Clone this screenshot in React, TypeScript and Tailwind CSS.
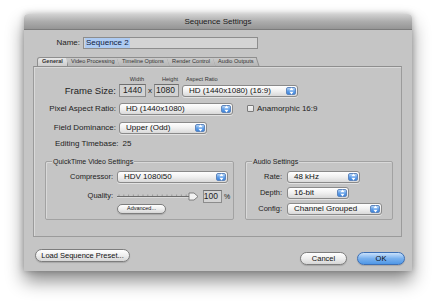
import type { ReactNode } from 'react';

function Arrows() {
  return (
    <svg width="5" height="8" viewBox="0 0 5 8">
      <path d="M2.5 0.5 L4.6 3.2 L0.4 3.2 Z" fill="#fff" />
      <path d="M2.5 7.5 L4.6 4.8 L0.4 4.8 Z" fill="#fff" />
    </svg>
  );
}

function Popup({ label, className }: { label: string; className: string }) {
  return (
    <div className={`flex h-[12px] items-stretch rounded-[3px] border border-[#8a8a8a] bg-linear-to-b from-[#ffffff] via-[#f0f0f0] to-[#d9d9d9] shadow-[0_1px_0_rgba(255,255,255,0.5)] ${className}`}>
      <div className="flex flex-1 items-center overflow-hidden whitespace-nowrap pl-[6px] text-[8px] leading-none text-[#111]">{label}</div>
      <div className="my-[1px] mr-[1px] flex w-[10px] items-center justify-center rounded-[2px] border border-[#5f86bd] bg-linear-to-b from-[#b9d8f8] via-[#5f9ee8] to-[#3f86dc]">
        <Arrows />
      </div>
    </div>
  );
}

function Field({ value, className }: { value: string; className: string }) {
  return (
    <div className={`flex h-[13px] items-center justify-end border border-[#8c8c8c] border-t-[#6e6e6e] bg-[#d3d3d3] pr-[3px] text-[8.5px] leading-none text-[#222] ${className}`}>
      {value}
    </div>
  );
}

function Pill({ children, className, blue }: { children: ReactNode; className: string; blue?: boolean }) {
  return (
    <div
      className={`flex items-center justify-center rounded-full border leading-none ${
        blue
          ? 'border-[#3d6fb4] bg-linear-to-b from-[#c9e1fb] via-[#79b1ee] to-[#4f97e6] text-[#0a0a0a]'
          : 'border-[#7d7d7d] bg-linear-to-b from-[#ffffff] via-[#eeeeee] to-[#d6d6d6] text-[#111]'
      } shadow-[0_1px_1px_rgba(0,0,0,0.15)] ${className}`}
    >
      {children}
    </div>
  );
}

function Group({ title, className, children }: { title: string; className: string; children: ReactNode }) {
  return (
    <div className={`relative h-[59px] rounded-[2px] border border-[#a2a2a2] shadow-[inset_1px_1px_0_rgba(255,255,255,0.35)] ${className}`}>
      <div className="absolute left-[6px] top-[-5px] bg-[#c5c5c5] px-[1px] text-[7px] leading-[9px] text-[#222]">{title}</div>
      {children}
    </div>
  );
}

function Slider() {
  const ticks = Array.from({ length: 16 }, (_, i) => 3 + i * 4.8);
  return (
    <svg width="84" height="9" viewBox="0 0 84 9">
      <line x1="1" y1="4.5" x2="76" y2="4.5" stroke="#6c6c6c" strokeWidth="1" />
      <line x1="1" y1="5.5" x2="76" y2="5.5" stroke="#e6e6e6" strokeWidth="0.6" />
      {ticks.map((x) => (
        <line key={x} x1={x} y1="2.5" x2={x} y2="4" stroke="#7a7a7a" strokeWidth="0.6" />
      ))}
      <path d="M73 1 L78 1 L82 4.5 L78 8 L73 8 Z" fill="#f2f2f2" stroke="#6a6a6a" strokeWidth="0.8" />
    </svg>
  );
}

const tabs = ['General', 'Video Processing', 'Timeline Options', 'Render Control', 'Audio Outputs'];

export default function App() {
  return (
    <div className="h-[304px] w-[435px] overflow-hidden bg-white pt-[14px] pl-[24px] [font-family:'Liberation_Sans',Arial,sans-serif]">
      <div className="flex h-[257px] w-[388px] flex-col rounded-t-[4px] shadow-[0_10px_18px_rgba(0,0,0,0.45),0_0_6px_rgba(0,0,0,0.25)]">
        {/* title bar */}
        <div className="flex h-[16px] items-center justify-center rounded-t-[4px] border-b border-[#7c7c7c] bg-linear-to-b from-[#d2d2d2] via-[#adadad] to-[#959595] text-[8px] leading-none text-[#1a1a1a]">
          Sequence Settings
        </div>

        <div className="flex flex-1 flex-col bg-[#c5c5c5]">
          {/* name */}
          <div className="mt-[7px] flex h-[12px] items-center">
            <div className="w-[56px] text-right text-[8px] leading-none text-[#222]">Name:</div>
            <div className="ml-[3px] flex h-[12px] w-[175px] items-center border border-[#8d8d8d] bg-[#d4d4d4] pl-[1px] text-[8px] leading-none">
              <span className="bg-[#aecbf2] px-[1px] py-[1px] text-[#102040]">Sequence 2</span>
            </div>
          </div>

          {/* tabs */}
          <div className="mt-[8px] flex h-[9px] items-end pl-[13px]">
            {tabs.map((t, i) => (
              <div
                key={t}
                className={`-mr-[1px] flex h-[9px] items-center border-t border-r border-[#8e8e8e] px-[4px] text-[5.6px] leading-none text-[#333] ${
                  i === 0
                    ? 'rounded-tl-[3px] border-l bg-linear-to-b from-[#e8e8e8] to-[#cdcdcd] font-semibold'
                    : 'bg-linear-to-b from-[#cbcbcb] to-[#b5b5b5] [transform:skewX(18deg)]'
                }`}
              >
                <span className={i === 0 ? '' : '[display:inline-block] [transform:skewX(-18deg)]'}>{t}</span>
              </div>
            ))}
          </div>

          {/* pane */}
          <div className="ml-[9px] flex h-[171px] w-[369px] flex-col border border-[#9b9b9b] border-t-[#8e8e8e] text-[7.5px] leading-none text-[#222] shadow-[inset_1px_1px_0_rgba(255,255,255,0.35)]">
            <div className="mt-[9px] flex h-[7px] items-center text-[5.6px] text-[#333]">
              <div className="ml-[90px] w-[26px] text-center">Width</div>
              <div className="ml-[8px] w-[24px] text-center">Height</div>
              <div className="ml-[4px]">Aspect Ratio</div>
            </div>

            <div className="mt-[1px] flex h-[13px] items-center">
              <div className="w-[82px] text-right text-[9.5px]">Frame Size:</div>
              <Field value="1440" className="ml-[3px] w-[27px]" />
              <div className="w-[8px] text-center text-[8px]">x</div>
              <Field value="1080" className="w-[25px]" />
              <Popup label="HD (1440x1080) (16:9)" className="ml-[3px] w-[116px]" />
            </div>

            <div className="mt-[5px] flex h-[13px] items-center">
              <div className="w-[82px] text-right text-[8px]">Pixel Aspect Ratio:</div>
              <Popup label="HD (1440x1080)" className="ml-[3px] w-[114px]" />
              <div className="ml-[14px] h-[7px] w-[7px] rounded-[1px] border border-[#7a7a7a] bg-linear-to-b from-[#f4f4f4] to-[#dedede]" />
              <div className="ml-[3px] text-[8px]">Anamorphic 16:9</div>
            </div>

            <div className="mt-[6px] flex h-[13px] items-center">
              <div className="w-[82px] text-right text-[8px]">Field Dominance:</div>
              <Popup label="Upper (Odd)" className="ml-[3px] w-[88px]" />
            </div>

            <div className="mt-[3px] flex h-[13px] items-center pl-[21px] text-[8px]">
              Editing Timebase:<span className="ml-[4px]">25</span>
            </div>

            <div className="mt-[11px] flex">
              <Group title="QuickTime Video Settings" className="ml-[11px] w-[189px]">
                <div className="mt-[9px] flex h-[12px] items-center">
                  <div className="w-[67px] text-right text-[7.5px]">Compressor:</div>
                  <Popup label="HDV 1080i50" className="ml-[4px] w-[111px]" />
                </div>
                <div className="mt-[7px] flex h-[12px] items-center">
                  <div className="w-[67px] text-right text-[7.5px]">Quality:</div>
                  <div className="ml-[3px]">
                    <Slider />
                  </div>
                  <Field value="100" className="ml-[3px] h-[12px] w-[19px]" />
                  <div className="ml-[2px] text-[7px]">%</div>
                </div>
                <div className="mt-[2px] flex">
                  <Pill className="ml-[71px] h-[10px] w-[49px] text-[5.5px]">Advanced...</Pill>
                </div>
              </Group>

              <Group title="Audio Settings" className="ml-[11px] w-[148px]">
                <div className="mt-[9px] flex h-[12px] items-center">
                  <div className="w-[36px] text-right text-[7.5px]">Rate:</div>
                  <Popup label="48 kHz" className="ml-[5px] w-[73px]" />
                </div>
                <div className="mt-[4px] flex h-[12px] items-center">
                  <div className="w-[36px] text-right text-[7.5px]">Depth:</div>
                  <Popup label="16-bit" className="ml-[5px] w-[62px]" />
                </div>
                <div className="mt-[4px] flex h-[12px] items-center">
                  <div className="w-[36px] text-right text-[7.5px]">Config:</div>
                  <Popup label="Channel Grouped" className="ml-[5px] w-[95px]" />
                </div>
              </Group>
            </div>
          </div>

          {/* buttons */}
          <div className="mt-[12px] flex items-start text-[7.5px]">
            <Pill className="ml-[11px] h-[13px] w-[95px]">Load Sequence Preset...</Pill>
            <Pill className="ml-[170px] mt-[3px] h-[13px] w-[47px]">Cancel</Pill>
            <Pill blue className="ml-[10px] mt-[3px] h-[13px] w-[48px]">OK</Pill>
          </div>
        </div>
      </div>
    </div>
  );
}
